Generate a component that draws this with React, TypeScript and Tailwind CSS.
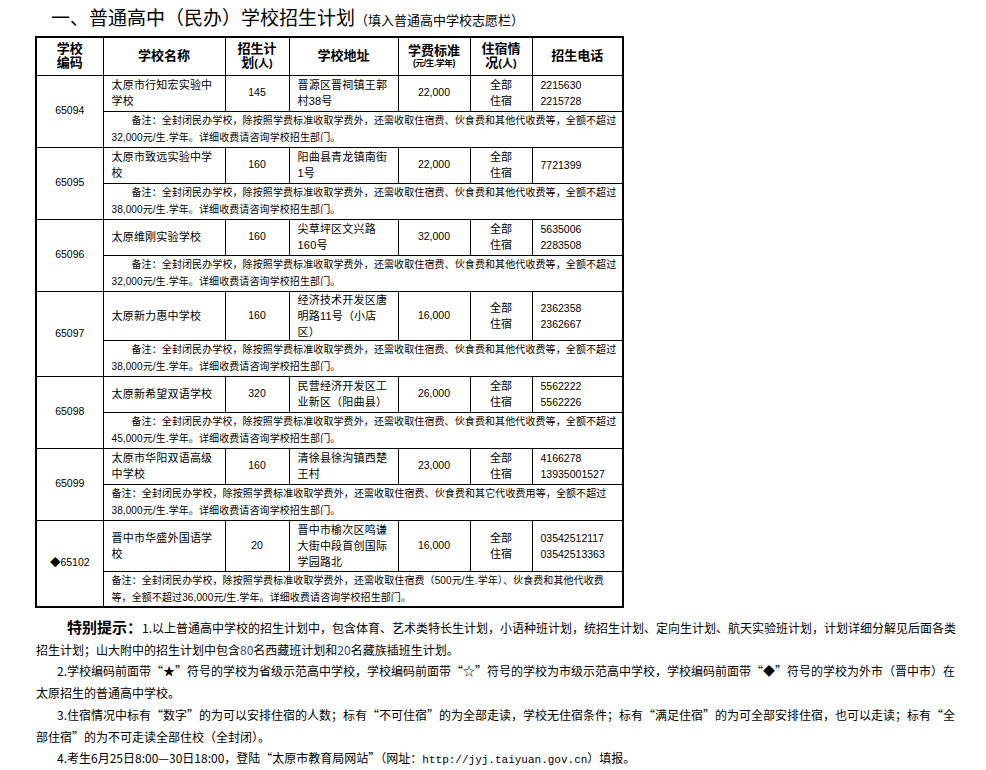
import React from 'react';

type School = {
  code: string;
  name: string[];
  plan: string;
  addr: string[];
  fee: string;
  phones: string[];
  note: string[];
  indent: boolean;
  rowH: string;
};

const schools: School[] = [
  {
    code: '65094',
    name: ['太原市行知宏实验中', '学校'],
    plan: '145',
    addr: ['晋源区晋祠镇王郭', '村38号'],
    fee: '22,000',
    phones: ['2215630', '2215728'],
    note: [
      '备注：全封闭民办学校，除按照学费标准收取学费外，还需收取住宿费、伙食费和其他代收费等，全额不超过',
      '32,000元/生.学年。详细收费请咨询学校招生部门。',
    ],
    indent: true,
    rowH: 'h-[36px]',
  },
  {
    code: '65095',
    name: ['太原市致远实验中学', '校'],
    plan: '160',
    addr: ['阳曲县青龙镇南街', '1号'],
    fee: '22,000',
    phones: ['7721399'],
    note: [
      '备注：全封闭民办学校，除按照学费标准收取学费外，还需收取住宿费、伙食费和其他代收费等，全额不超过',
      '38,000元/生.学年。详细收费请咨询学校招生部门。',
    ],
    indent: true,
    rowH: 'h-[36px]',
  },
  {
    code: '65096',
    name: ['太原维刚实验学校'],
    plan: '160',
    addr: ['尖草坪区文兴路', '160号'],
    fee: '32,000',
    phones: ['5635006', '2283508'],
    note: [
      '备注：全封闭民办学校，除按照学费标准收取学费外，还需收取住宿费、伙食费和其他代收费等，全额不超过',
      '32,000元/生.学年。详细收费请咨询学校招生部门。',
    ],
    indent: true,
    rowH: 'h-[36px]',
  },
  {
    code: '65097',
    name: ['太原新力惠中学校'],
    plan: '160',
    addr: ['经济技术开发区唐', '明路11号（小店', '区）'],
    fee: '16,000',
    phones: ['2362358', '2362667'],
    note: [
      '备注：全封闭民办学校，除按照学费标准收取学费外，还需收取住宿费、伙食费和其他代收费等，全额不超过',
      '38,000元/生.学年。详细收费请咨询学校招生部门。',
    ],
    indent: true,
    rowH: 'h-[48px]',
  },
  {
    code: '65098',
    name: ['太原新希望双语学校'],
    plan: '320',
    addr: ['民营经济开发区工', '业新区（阳曲县）'],
    fee: '26,000',
    phones: ['5562222', '5562226'],
    note: [
      '备注：全封闭民办学校，除按照学费标准收取学费外，还需收取住宿费、伙食费和其他代收费等，全额不超过',
      '45,000元/生.学年。详细收费请咨询学校招生部门。',
    ],
    indent: true,
    rowH: 'h-[36px]',
  },
  {
    code: '65099',
    name: ['太原市华阳双语高级', '中学校'],
    plan: '160',
    addr: ['清徐县徐沟镇西楚', '王村'],
    fee: '23,000',
    phones: ['4166278', '13935001527'],
    note: [
      '备注：全封闭民办学校，除按照学费标准收取学费外，还需收取住宿费、伙食费和其它代收费用等，全额不超过',
      '38,000元/生.学年。详细收费请咨询学校招生部门。',
    ],
    indent: false,
    rowH: 'h-[36px]',
  },
  {
    code: '◆65102',
    name: ['晋中市华盛外国语学', '校'],
    plan: '20',
    addr: ['晋中市榆次区鸣谦', '大街中段首创国际', '学园路北'],
    fee: '16,000',
    phones: ['03542512117', '03542513363'],
    note: [
      '备注：全封闭民办学校，除按照学费标准收取学费外，还需收取住宿费（500元/生.学年）、伙食费和其他代收费',
      '等，全额不超过36,000元/生.学年。详细收费请咨询学校招生部门。',
    ],
    indent: false,
    rowH: 'h-[51px]',
  },
];

const cell = 'border border-black align-middle';
const head = 'border border-black align-middle text-center font-bold text-[13px] leading-[14px]';

function Lines({ items }: { items: string[] }) {
  return (
    <>
      {items.map((t, i) => (
        <div key={i}>{t}</div>
      ))}
    </>
  );
}

export default function App() {
  return (
    <div className="w-[986px] h-[770px] overflow-hidden bg-white text-black font-[family-name:'Liberation_Sans','Noto_Sans_CJK_SC',sans-serif]">
      <div className="h-[36px] pl-[51px] pt-[3px] whitespace-nowrap font-[family-name:'Noto_Sans_CJK_SC',sans-serif]">
        <span className="text-[19px] leading-[28px]">一、普通高中（民办）学校招生计划</span>
        <span className="text-[13px] leading-[28px]">（填入普通高中学校志愿栏）</span>
      </div>

      <table className="ml-[35px] w-[587px] table-fixed border-collapse border-2 border-black">
        <colgroup>
          <col className="w-[67px]" />
          <col className="w-[122px]" />
          <col className="w-[64px]" />
          <col className="w-[109px]" />
          <col className="w-[72px]" />
          <col className="w-[62px]" />
          <col className="w-[91px]" />
        </colgroup>
        <thead>
          <tr className="h-[38px]">
            <th className={head}>
              <div>学校</div>
              <div>编码</div>
            </th>
            <th className={head}>学校名称</th>
            <th className={head}>
              <div>招生计</div>
              <div>
                划<span className="text-[11px]">(人)</span>
              </div>
            </th>
            <th className={head}>学校地址</th>
            <th className={head}>
              <div>学费标准</div>
              <div className="text-[8.5px] leading-[11px] tracking-[-0.3px]">(元/生.学年)</div>
            </th>
            <th className={head}>
              <div>住宿情</div>
              <div>
                况<span className="text-[11px]">(人)</span>
              </div>
            </th>
            <th className={head}>招生电话</th>
          </tr>
        </thead>
        <tbody>
          {schools.map((s) => (
            <React.Fragment key={s.code}>
              <tr className={s.rowH}>
                <td rowSpan={2} className={`${cell} text-center text-[10.5px]`}>
                  {s.code}
                </td>
                <td className={`${cell} px-2 text-[11px] leading-[16px] tracking-[0.2px] whitespace-nowrap`}>
                  <Lines items={s.name} />
                </td>
                <td className={`${cell} text-center text-[10.5px]`}>{s.plan}</td>
                <td className={`${cell} px-2 text-[11px] leading-[16px] tracking-[0.2px] whitespace-nowrap`}>
                  <Lines items={s.addr} />
                </td>
                <td className={`${cell} text-center text-[10.5px]`}>{s.fee}</td>
                <td className={`${cell} text-center text-[11px] leading-[16px]`}>
                  <div>全部</div>
                  <div>住宿</div>
                </td>
                <td className={`${cell} px-2 text-[10.5px] leading-[16px]`}>
                  <Lines items={s.phones} />
                </td>
              </tr>
              <tr className="h-[36px]">
                <td colSpan={6} className={`${cell} px-2 text-[10px] leading-[17px] tracking-[0.1px] whitespace-nowrap`}>
                  <div className={s.indent ? 'pl-[20px]' : ''}>{s.note[0]}</div>
                  <div>{s.note[1]}</div>
                </td>
              </tr>
            </React.Fragment>
          ))}
        </tbody>
      </table>

      <div className="mt-[8px] pl-[36px] text-[12px] leading-[21.7px] whitespace-nowrap font-[family-name:'Noto_Sans_CJK_SC',sans-serif]">
        <div className="pl-[31px]">
          <span className="text-[15px] leading-[21px] font-bold">特别提示：</span>
          1.以上普通高中学校的招生计划中，包含体育、艺术类特长生计划，小语种班计划，统招生计划、定向生计划、航天实验班计划，计划详细分解见后面各类
        </div>
        <div>
          招生计划；山大附中的招生计划中包含<span className="text-[#34489c]">80</span>名西藏班计划和
          <span className="text-[#34489c]">20</span>名藏族插班生计划。
        </div>
        <div className="pl-[21px]">
          2.学校编码前面带“★”符号的学校为省级示范高中学校，学校编码前面带“☆”符号的学校为市级示范高中学校，学校编码前面带“◆”符号的学校为外市（晋中市）在
        </div>
        <div>太原招生的普通高中学校。</div>
        <div className="pl-[21px]">
          3.住宿情况中标有“数字”的为可以安排住宿的人数；标有“不可住宿”的为全部走读，学校无住宿条件；标有“满足住宿”的为可全部安排住宿，也可以走读；标有“全
        </div>
        <div>部住宿”的为不可走读全部住校（全封闭）。</div>
        <div className="pl-[21px]">
          4.考生6月25日8:00—30日18:00，登陆“太原市教育局网站”（网址：
          <span className="text-[11px] font-[family-name:'Liberation_Mono',monospace]">http://jyj.taiyuan.gov.cn</span>
          ）填报。
        </div>
      </div>
    </div>
  );
}
